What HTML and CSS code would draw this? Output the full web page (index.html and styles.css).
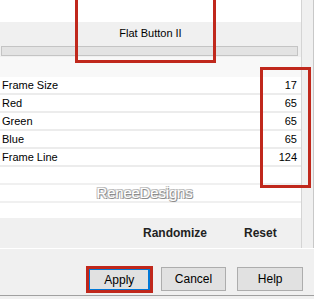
FILE: index.html
```html
<!DOCTYPE html>
<html>
<head lang="en">
    <meta charset="UTF-8">
    <title>Flat Button II</title>
    <link rel="stylesheet" href="styles.css">
</head>
<body>
<div id="dialog">
    <div id="main">
        <div id="panel">
            <div class="preview"></div>
            <div class="title-band">
                <div class="title">Flat Button II</div>
                <div class="slider"></div>
            </div>
            <div class="gap"></div>
            <ul id="params">
                <li><span>Frame Size</span><span>17</span></li>
                <li><span>Red</span><span>65</span></li>
                <li><span>Green</span><span>65</span></li>
                <li><span>Blue</span><span>65</span></li>
                <li><span>Frame Line</span><span>124</span></li>
                <li class="empty"></li>
                <li class="empty mark">ReneeDesigns</li>
                <li class="empty last"></li>
            </ul>
            <div class="actions">
                <span class="act-rand">Randomize</span>
                <span class="act-reset">Reset</span>
            </div>
        </div>
        <div id="strip"></div>
    </div>
    <div id="buttons">
        <span class="btn btn-apply">Apply</span>
        <span class="btn">Cancel</span>
        <span class="btn">Help</span>
    </div>
    <!-- annotations -->
    <div class="note note-title"></div>
    <div class="note note-values"></div>
</div>
</body>
</html>
```
FILE: styles.css
```css
*{
    margin: 0;
    padding: 0;
}
ul{
    list-style: none;
}
body{
    width: 314px;
    height: 299px;
    overflow: hidden;
    background: #f0f0f0;
    font-family: "Liberation Sans", Arial, sans-serif;
    font-size: 11px;
    color: #000;
}
#dialog{
    position: relative;
    width: 314px;
    height: 299px;
    display: flex;
    flex-direction: column;
}
#main{
    display: flex;
    height: 248px;
}
#panel{
    width: 301px;
    background: #fff;
    border-right: 1px solid #d4d4d4;
    display: flex;
    flex-direction: column;
}
#strip{
    flex: 1;
    background: #f0f0f0;
    border-right: 1px solid #c8c8c8;
}
.preview{
    height: 22px;
}
.title-band{
    height: 35px;
    background: #f0f0f0;
}
.title{
    height: 22px;
    line-height: 22px;
    text-align: center;
    padding-left: 0;
}
.slider{
    height: 8px;
    margin: 2px 3px 0 1px;
    background: #e3e3e3;
    border: 1px solid #c4c4c4;
}
.gap{
    height: 20px;
    background: #f8f8f8;
}
#params li{
    height: 16px;
    line-height: 16px;
    border-bottom: 2px solid #ececec;
    display: flex;
    justify-content: space-between;
    padding: 0 4px 0 2px;
}
#params li.empty{
    border-bottom-color: #f0f0f0;
}
#params li.mark{
    justify-content: center;
    padding-right: 14px;
    font-size: 15px;
    color: #fff;
    text-shadow: 1px 1px 0 #8c8c8c, -1px -1px 0 #c8c8c8, 1px -1px 0 #b4b4b4, -1px 1px 0 #b4b4b4;
    letter-spacing: -0.2px;
}
#params li.last{
    height: 15px;
    border-bottom: 0;
}
.actions{
    flex: 1;
    background: #f0f0f0;
    display: flex;
    align-items: center;
    font-weight: bold;
    font-size: 12px;
    color: #222;
}
.act-rand{
    margin-left: 143px;
}
.act-reset{
    margin-left: 37px;
}
#buttons{
    flex: 1;
    display: flex;
    align-items: flex-start;
    padding: 17px 0 0 86px;
    border-top: 1px solid #fff;
    border-bottom: 1px solid #a0a0a0;
    margin-bottom: 3px;
}
.btn{
    width: 64px;
    height: 22px;
    line-height: 22px;
    text-align: center;
    font-size: 12px;
    background: #e1e1e1;
    border: 1px solid #adadad;
    margin-right: 11px;
    margin-top: 1px;
}
.btn-apply{
    width: 61px;
    height: 21px;
    margin-top: 0;
    margin-right: 8px;
    border: 3px solid #c0281c;
    box-shadow: inset -2px 0 0 #0078d7, inset 0 0 0 1px #0078d7;
}
.note{
    position: absolute;
    border: 3px solid #c0281c;
}
.note-title{
    left: 75px;
    top: -4px;
    width: 135px;
    height: 61px;
}
.note-values{
    left: 260px;
    top: 67px;
    width: 45px;
    height: 115px;
}
```
